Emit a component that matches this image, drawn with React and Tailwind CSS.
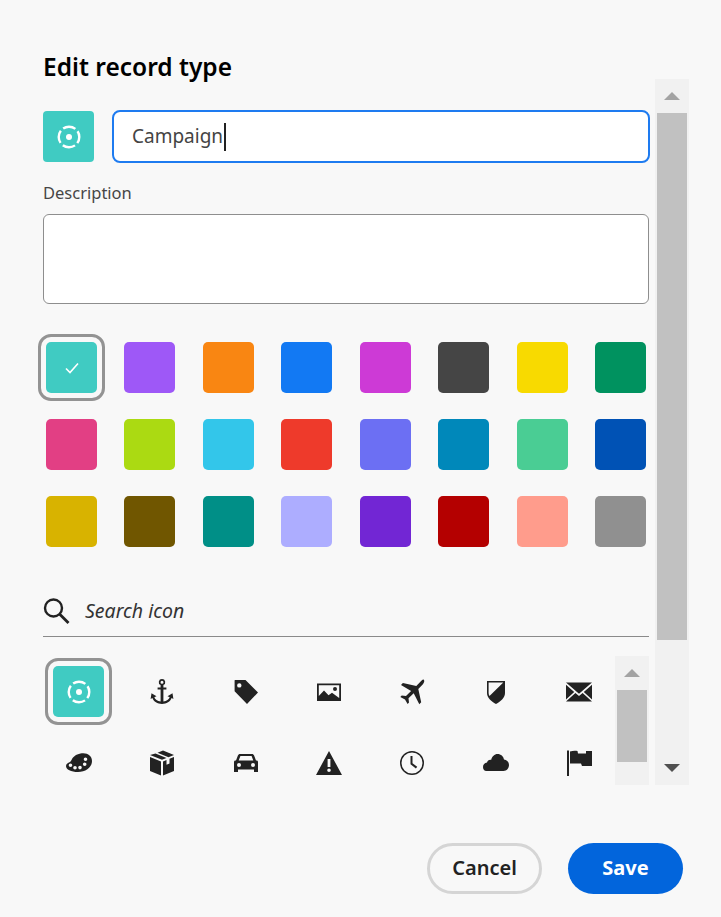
import React from 'react';

const swatches = [
  '#40cbc2', '#9e58f7', '#f98612', '#1279f3', '#cd3ad6', '#454545', '#f8da00', '#00925f',
  '#e23f84', '#abda12', '#33c6ea', '#ee3a2b', '#6c6ff3', '#0088ba', '#4acd94', '#0052b5',
  '#d8b300', '#705600', '#008f87', '#adadff', '#7226d4', '#b40000', '#ff9c8c', '#909090',
];

function TargetIcon() {
  return (
    <svg width="28" height="28" viewBox="0 0 28 28" fill="none">
      <circle cx="14" cy="14" r="3" fill="#fff" />
      <circle cx="14" cy="14" r="10.300" stroke="#fff" strokeWidth="2.400" strokeDasharray="13 3.180" strokeDashoffset="6.500" />
    </svg>
  );
}

// filled glyphs drawn on a 28 box
const glyphs = [
  <path key="a" fillRule="evenodd" d="M14 1a3.200 3.200 0 0 1 1.400 6.100V9.500h3v2h-3v12c3.300-.4 5.500-2 6.300-4.300l-2.200-.9 5-3 .9 5.600-1.800-.8c-1.300 3.500-5 5.900-9.600 5.900s-8.300-2.400-9.600-5.900l-1.800.8.900-5.600 5 3-2.200.9c.8 2.300 3 3.900 6.300 4.300v-12h-3v-2h3V7.100A3.200 3.200 0 0 1 14 1Zm0 1.700a1.500 1.500 0 1 0 0 3 1.500 1.500 0 0 0 0-3Z" />,
  <path key="b" fillRule="evenodd" d="M3 2h10.500L26 14.500 15 26 2.600 13.200V3A1 1 0 0 1 3 2Zm4.300 3.200a2.200 2.200 0 1 0 0 4.400 2.200 2.200 0 0 0 0-4.400Z" />,
  <path key="c" fillRule="evenodd" d="M2 5.500h24v17.500H2Zm1.800 1.800v10.800L9 12.600l4.500 4.700 3.500-2.500 7.200 5.200V7.300Zm16.200 1.700a2 2 0 1 1 0 4 2 2 0 0 1 0-4Z" />,
  <path key="d" d="M25.600 1.600c1.200 1.100.8 3-.7 4.600l-4.600 4.700 2.900 13.400-1.900 2-5.600-11-5.200 5 .5 4.300-1.400 1.400-2.600-4.600-4.700-2.500 1.400-1.400 4.300.5 5.100-5.100L3 7.100l1.900-2 13.400 3 4.600-4.800c.9-1 2-2.300 2.700-1.700Z" />,
  <path key="e" fillRule="evenodd" d="M5 3h18v12c0 4.500-4 8.500-9 11-5-2.500-9-6.500-9-11Zm1.600 1.600V15c0 1.100.3 2 .9 3L21.300 4.600Z" />,
  <path key="f" d="M1 4.500h26L14 15.800Zm0 2.300 8.200 7.100L1 21.500Zm26 0v14.700l-8.200-7.600ZM10.400 15 14 18.100l3.600-3.100L27 23.500H1Z" />,
  <path key="g" fillRule="evenodd" d="M15.500 4.500c6.500-1.300 11.500 2 11.500 7.500 0 6.500-6.500 11-14 11C6 23 1 20.500 1 17c0-3 4-3.500 5-5 .9-1.500 2-6 9.500-7.500ZM5.500 14.500a1.800 1.800 0 1 0 0 3.600 1.800 1.800 0 0 0 0-3.600Zm4.500 2.500a1.800 1.800 0 1 0 0 3.600 1.800 1.800 0 0 0 0-3.600Zm5-.2a1.800 1.800 0 1 0 0 3.600 1.800 1.800 0 0 0 0-3.600Zm4.700-3.300a1.800 1.800 0 1 0 0 3.600 1.800 1.800 0 0 0 0-3.600Zm.8-5a1.800 1.800 0 1 0 0 3.600 1.800 1.800 0 0 0 0-3.600Z" />,
  <path key="h" d="M15 1.500 26 6l-5.500 2.200-11-4.500Zm-7.500 3 11 4.500L14 10.800 2 6ZM2 8l11 4.500V26.500L2 22Zm24 0v14l-11 4.500V12.500l3.500-1.400v4.600l3-1.200V9.800Z" />,
  <path key="i" fillRule="evenodd" d="M8 5h12c1 0 1.800.6 2.100 1.500L24 11.500h.5c1 0 1.500.7 1.500 1.500v10h-4v-2.500H6V23H2V13c0-.8.500-1.500 1.500-1.500H4l1.900-5C6.200 5.600 7 5 8 5Zm.4 2L6.700 11.500h14.600L19.600 7ZM7 14a2 2 0 1 0 0 4 2 2 0 0 0 0-4Zm14 0a2 2 0 1 0 0 4 2 2 0 0 0 0-4Z" />,
  <path key="j" fillRule="evenodd" d="M14 2 27 26H1ZM12.600 10v8h2.800v-8Zm1.400 9.500a1.800 1.800 0 1 0 0 3.600 1.800 1.800 0 0 0 0-3.600Z" />,
  <path key="k" fillRule="evenodd" d="M14 2a12 12 0 1 1 0 24 12 12 0 0 1 0-24Zm0 1.500a10.500 10.500 0 1 0 0 21 10.500 10.500 0 0 0 0-21ZM12.500 7h2v7.200l4.700 3.600-1.300 1.700-5.400-4.300Z" />,
  <path key="l" d="M15.500 5c3.400 0 6 2.400 6.500 5.600 2.900.4 5 2.500 5 5.400 0 3-2.300 6-5.500 6h-17C2 22 1 20 1 18c0-2.300 1.700-4.200 4-4.400.3-1.600 1.600-2.800 3.400-2.800.2 0 .5 0 .7.100C10 7.500 12.500 5 15.500 5Z" />,
  <path key="m" d="M2 1.500h2V27H2Zm3 1c2.500-.8 5-1 7.500-.5l.5 2.500h8V2h6v15H17l-1-2.500H5Z" />,
];

function Glyph({ children }) {
  return (
    <svg width="28" height="28" viewBox="0 0 28 28" fill="#222222">
      {children}
    </svg>
  );
}

function ScrollTrack({ className, thumbClass, children }) {
  return (
    <div className={`flex w-[34px] shrink-0 flex-col bg-[#f1f1f1] ${className}`}>
      <div className="flex h-[34px] items-center justify-center">
        <div className="h-0 w-0 border-x-[8px] border-b-[8px] border-x-transparent border-b-[#a3a3a3]" />
      </div>
      <div className={`mx-[2px] bg-[#c1c1c1] ${thumbClass}`} />
      {children}
    </div>
  );
}

export default function App() {
  return (
    <div className="flex h-[917px] w-[721px] flex-col overflow-hidden bg-[#f8f8f8] pl-[43px] font-['Noto_Sans',sans-serif] text-[#222222]">
      <h1 className="h-[80px] pt-[49px] text-[24.500px] leading-[36px] font-semibold text-black">Edit record type</h1>

      <div className="mt-[-1px] flex gap-[6px]">
        <div className="w-[606px]">
          <div className="flex items-center gap-[18px] pt-[31px]">
            <div className="flex h-[51px] w-[51px] items-center justify-center rounded-[4px] bg-[#40cbc2]">
              <TargetIcon />
            </div>
            <div className="mr-[-1px] flex h-[53px] flex-1 items-center rounded-[8px] border-[2px] border-[#1e7bf0] bg-white pl-[18px] text-[19px] text-[#444444]">
              Campaign
              <span className="ml-[1px] h-[28px] w-[2px] bg-[#222222]" />
            </div>
          </div>

          <div className="mt-[17px] text-[16.500px] leading-[26px] text-[#464646]">Description</div>
          <div className="mt-[8px] h-[90px] rounded-[6px] border border-[#8e8e8e] bg-white" />

          <div className="mt-[38px] grid [grid-template-columns:repeat(8,51px)] justify-between gap-y-[26px] px-[3px]">
            {swatches.map((color, i) => (
              <div
                key={color}
                style={{ backgroundColor: color }}
                className={`flex h-[51px] w-[51px] items-center justify-center rounded-[5px] ${i === 0 ? 'outline-[3px] outline-offset-[5px] outline-[#939393]' : ''}`}
              >
                {i === 0 && (
                  <svg width="16" height="16" viewBox="0 0 16 16" fill="none" stroke="#fff" strokeWidth="1.600">
                    <path d="m2 8.500 4 4 8-9" />
                  </svg>
                )}
              </div>
            ))}
          </div>

          <div className="mt-[45px] flex h-[45px] items-center border-b border-[#8a8a8a] pb-[6px]">
            <svg className="shrink-0" width="28" height="28" viewBox="0 0 28 28" fill="none" stroke="#222222" strokeWidth="2.400">
              <circle cx="10.500" cy="11" r="8.500" />
              <path d="m16.500 17 9 9" strokeWidth="2.800" />
            </svg>
            <span className="ml-[14px] text-[19.500px] text-[#333333] italic">Search icon</span>
          </div>

          <div className="mt-[19px] flex h-[129px]">
            <div className="flex-1 overflow-hidden pt-[10px] pr-[10px] pl-[10px]">
              <div className="grid [grid-template-columns:repeat(7,52px)] justify-between gap-y-[20px]">
                <div className="flex h-[51px] w-[51px] items-center justify-center rounded-[5px] bg-[#40cbc2] outline-[3px] outline-offset-[5px] outline-[#939393]">
                  <TargetIcon />
                </div>
                {glyphs.map((g) => (
                  <div key={g.key} className="flex h-[51px] items-center justify-center">
                    <Glyph>{g}</Glyph>
                  </div>
                ))}
              </div>
            </div>
            <ScrollTrack thumbClass="h-[72px]" />
          </div>
        </div>

        <ScrollTrack className="h-[706px]" thumbClass="h-[527px]">
          <div className="mt-auto flex h-[34px] items-center justify-center">
            <div className="h-0 w-0 border-x-[8px] border-t-[8px] border-x-transparent border-t-[#505050]" />
          </div>
        </ScrollTrack>
      </div>

      <div className="mt-[58px] flex justify-end gap-[26px] pr-[38px]">
        <button className="h-[51px] w-[115px] rounded-full border-[3px] border-[#d5d5d5] pb-[2px] text-[20px] font-semibold text-[#222222]">Cancel</button>
        <button className="h-[51px] w-[115px] rounded-full bg-[#0265dc] pb-[2px] text-[20px] font-bold text-white">Save</button>
      </div>
    </div>
  );
}
